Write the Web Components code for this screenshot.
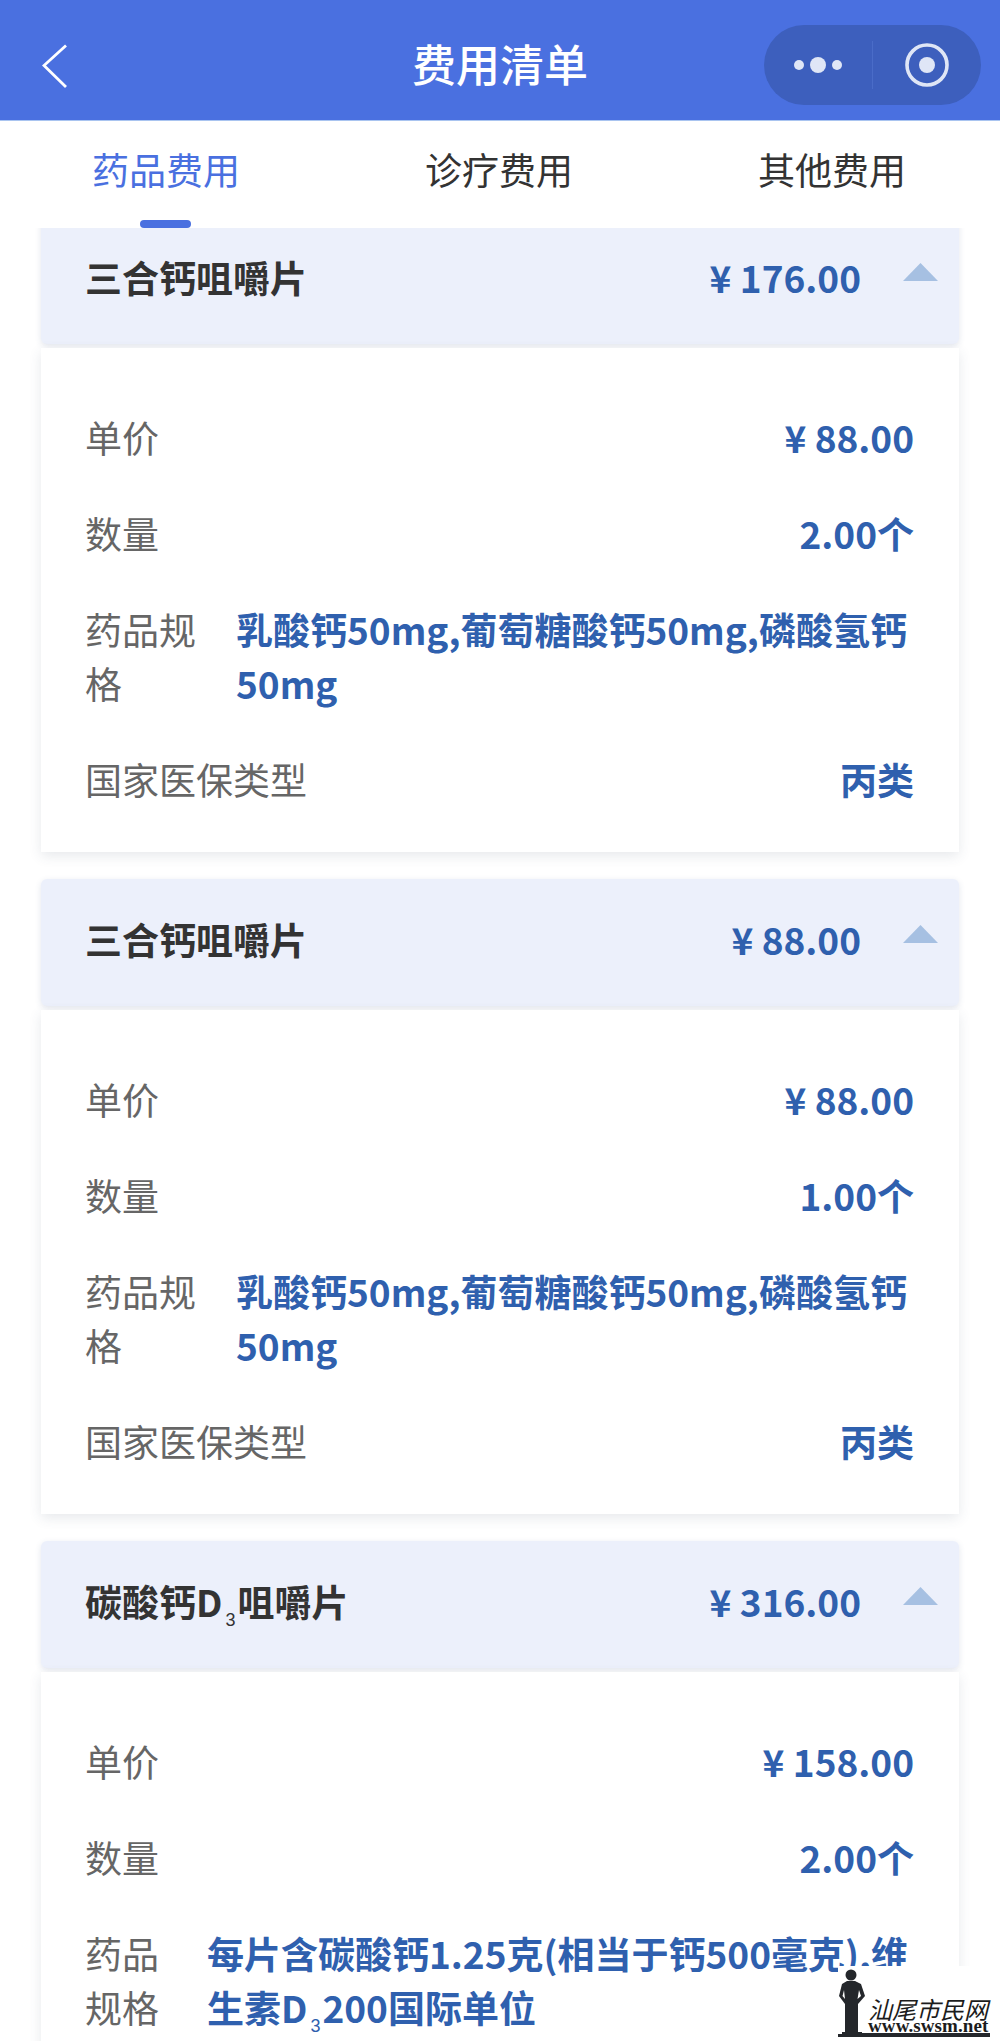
<!DOCTYPE html>
<html lang="zh">
<head>
<meta charset="utf-8">
<title>费用清单</title>
<style>
  html, body { margin: 0; height: 2041px; overflow: hidden; background: #fff; }
  body { font-family: "Noto Sans CJK SC", "Noto Sans", sans-serif; }
  sub.ind { font: 400 18px/0 "Liberation Sans", sans-serif; vertical-align: -9px; margin: 0 2px 0 3px; }
</style>
</head>
<body>
<pagina-costes>
  <barra-titulo slot="barra" titulo="费用清单"></barra-titulo>
  <pestanas-coste slot="pestanas"></pestanas-coste>

  <tarjeta-medicina>
    <span slot="nombre">三合钙咀嚼片</span>
    <span slot="total">¥ 176.00</span>
    <fila-dato etiqueta="单价">¥ 88.00</fila-dato>
    <fila-dato etiqueta="数量">2.00个</fila-dato>
    <fila-dato etiqueta="药品规格" ancho="112" hueco="39">乳酸钙50mg,葡萄糖酸钙50mg,磷酸氢钙50mg</fila-dato>
    <fila-dato etiqueta="国家医保类型">丙类</fila-dato>
  </tarjeta-medicina>

  <tarjeta-medicina>
    <span slot="nombre">三合钙咀嚼片</span>
    <span slot="total">¥ 88.00</span>
    <fila-dato etiqueta="单价">¥ 88.00</fila-dato>
    <fila-dato etiqueta="数量">1.00个</fila-dato>
    <fila-dato etiqueta="药品规格" ancho="112" hueco="39">乳酸钙50mg,葡萄糖酸钙50mg,磷酸氢钙50mg</fila-dato>
    <fila-dato etiqueta="国家医保类型">丙类</fila-dato>
  </tarjeta-medicina>

  <tarjeta-medicina>
    <span slot="nombre">碳酸钙D<sub class="ind">3</sub>咀嚼片</span>
    <span slot="total">¥ 316.00</span>
    <fila-dato etiqueta="单价">¥ 158.00</fila-dato>
    <fila-dato etiqueta="数量">2.00个</fila-dato>
    <fila-dato etiqueta="药品规格" ancho="74" hueco="48">每片含碳酸钙1.25克(相当于钙500毫克),维生素D<sub class="ind">3</sub>200国际单位</fila-dato>
  </tarjeta-medicina>

  <marca-agua slot="marca"></marca-agua>
</pagina-costes>

<script>
// Pagina completa: barra, pestanas y lista recortada por arriba
class PaginaCostes extends HTMLElement {
  constructor() {
    super();
    this.attachShadow({mode: 'open'}).innerHTML = `
      <style>
        :host { display: flex; flex-direction: column; height: 2041px; position: relative; overflow: hidden; background: #fff; }
        .lista { flex: 1; overflow: hidden; min-height: 0; }
        .rollo { display: flex; flex-direction: column; gap: 27px; margin-top: -11px; padding: 0 41px 0 41px; }
      </style>
      <slot name="barra"></slot>
      <slot name="pestanas"></slot>
      <div class="lista"><div class="rollo"><slot></slot></div></div>
      <slot name="marca"></slot>`;
  }
}

class BarraTitulo extends HTMLElement {
  constructor() {
    super();
    this.attachShadow({mode: 'open'}).innerHTML = `
      <style>
        :host { display: flex; align-items: center; justify-content: space-between; height: 121px; flex: none;
                padding: 0 19px 0 42px; box-sizing: border-box; background: #4a70e0; position: relative;
                border-bottom: 1px solid #a9c4f0; }
        h1 { position: absolute; left: 0; right: 0; top: 34px; margin: 0; text-align: center; color: #fff;
             font-size: 44px; line-height: 58px; font-weight: 500; }
        .volver { display: block; margin-top: 12px; }
        .capsula { display: flex; align-items: center; width: 217px; height: 80px; margin-top: 10px; border-radius: 40px;
                   background: #3d5fbd; position: relative; z-index: 1; }
        .capsula > div { flex: 1; display: flex; align-items: center; justify-content: center; }
        .capsula > div + div { border-left: 1px solid #4a6cc8; height: 48px; }
      </style>
      <svg class="volver" width="26" height="44" viewBox="0 0 26 44"><path d="M24 1.5 L2 21.5 L24 43" fill="none" stroke="#fff" stroke-width="2.8"/></svg>
      <h1></h1>
      <div class="capsula">
        <div><svg width="48" height="20" viewBox="0 0 48 20" fill="#dfe6f6"><circle cx="5" cy="10" r="5"/><circle cx="24" cy="10" r="8"/><circle cx="43" cy="10" r="5"/></svg></div>
        <div><svg width="44" height="44" viewBox="0 0 44 44"><circle cx="22" cy="22" r="20" fill="none" stroke="#dfe6f6" stroke-width="3.6"/><circle cx="22" cy="22" r="8" fill="#dfe6f6"/></svg></div>
      </div>`;
    this.shadowRoot.querySelector('h1').textContent = this.getAttribute('titulo');
  }
}

class PestanasCoste extends HTMLElement {
  constructor() {
    super();
    this.attachShadow({mode: 'open'}).innerHTML = `
      <style>
        :host { display: flex; justify-content: space-between; height: 107px; flex: none; padding: 0 94px 0 92px; box-sizing: border-box;
                font-size: 37px; color: #333; position: relative; z-index: 2; }
        .p { position: relative; padding-top: 21px; line-height: 54px; white-space: nowrap; }
        .activa { color: #4a70e0; }
        .activa::after { content: ""; position: absolute; left: 48px; width: 51px; bottom: 0; height: 8px;
                         background: #4a70e0; border-radius: 4px; }
        .p.activa { height: 86px; }
      </style>
      <div class="p activa">药品费用</div>
      <div class="p">诊疗费用</div>
      <div class="p">其他费用</div>`;
  }
}

class TarjetaMedicina extends HTMLElement {
  constructor() {
    super();
    this.attachShadow({mode: 'open'}).innerHTML = `
      <style>
        :host { display: block; }
        header { display: flex; align-items: center; height: 127px; padding: 0 21px 8px 44px; box-sizing: border-box;
                 background: #ecf0fb; border-radius: 6px; box-shadow: 0 2px 6px rgba(60,80,130,.14); }
        .nombre { flex: 1; font-size: 37px; font-weight: 700; color: #333; line-height: 54px; }
        .total { font-size: 37px; font-weight: 700; color: #2f60ae; line-height: 54px; margin-right: 42px; white-space: nowrap; }
        svg { display: block; margin-top: -9px; }
        .cuerpo { margin-top: 4px; height: 504px; padding: 62px 45px 0 44px; box-sizing: border-box; background: #fff;
                  box-shadow: 0 4px 12px rgba(60,70,100,.12); display: flex; flex-direction: column; gap: 42px; }
      </style>
      <header>
        <div class="nombre"><slot name="nombre"></slot></div>
        <div class="total"><slot name="total"></slot></div>
        <svg width="35" height="18" viewBox="0 0 35 18"><path d="M17.5 0 L35 18 H0 Z" fill="#a6c0e2"/></svg>
      </header>
      <div class="cuerpo"><slot></slot></div>`;
  }
}

class FilaDato extends HTMLElement {
  constructor() {
    super();
    this.attachShadow({mode: 'open'}).innerHTML = `
      <style>
        :host { display: flex; justify-content: space-between; align-items: flex-start; font-size: 37px; line-height: 54px; }
        .etq { color: #666; flex: none; }
        .val { color: #2f60ae; font-weight: 700; }
      </style>
      <div class="etq"></div>
      <div class="val"><slot></slot></div>`;
    const etq = this.shadowRoot.querySelector('.etq');
    etq.textContent = this.getAttribute('etiqueta');
    if (this.hasAttribute('ancho')) {
      etq.style.width = this.getAttribute('ancho') + 'px';
      const val = this.shadowRoot.querySelector('.val');
      val.style.flex = '1';
      val.style.marginLeft = this.getAttribute('hueco') + 'px';
    }
  }
}

class MarcaAgua extends HTMLElement {
  constructor() {
    super();
    this.attachShadow({mode: 'open'}).innerHTML = `
      <style>
        :host { position: absolute; right: 0; bottom: 0; width: 162px; height: 75px; background: #fff; display: block; }
        svg { position: absolute; left: 0; top: 0; }
        .nom { position: absolute; left: 30px; top: 33px; font: italic 400 24px/20px "Noto Sans CJK SC", serif; color: #1c1c1c; white-space: nowrap; }
        .web { position: absolute; left: 30px; top: 53px; font: 700 19px/14px "Liberation Serif", serif; color: #1c1c1c; letter-spacing: .1px; white-space: nowrap; }
      </style>
      <svg width="162" height="75" viewBox="0 0 162 75" fill="#24272b">
        <circle cx="13" cy="9" r="5.5"/>
        <path fill-rule="evenodd" d="M9 15 H17 L23 18 L27 30 L20 38 L20 66 H7 L7 38 L1 30 L4 18 Z M6 24 L4.5 30 L7 33 Z M21 24 L19.5 33 L23 30 Z"/>
        <path d="M4 66 H24 V67 H152 V71 H0 V68 H4 Z"/>
      </svg>
      <div class="nom">汕尾市民网</div>
      <div class="web">www.swsm.net</div>`;
  }
}

customElements.define('pagina-costes', PaginaCostes);
customElements.define('barra-titulo', BarraTitulo);
customElements.define('pestanas-coste', PestanasCoste);
customElements.define('tarjeta-medicina', TarjetaMedicina);
customElements.define('fila-dato', FilaDato);
customElements.define('marca-agua', MarcaAgua);
</script>
</body>
</html>
